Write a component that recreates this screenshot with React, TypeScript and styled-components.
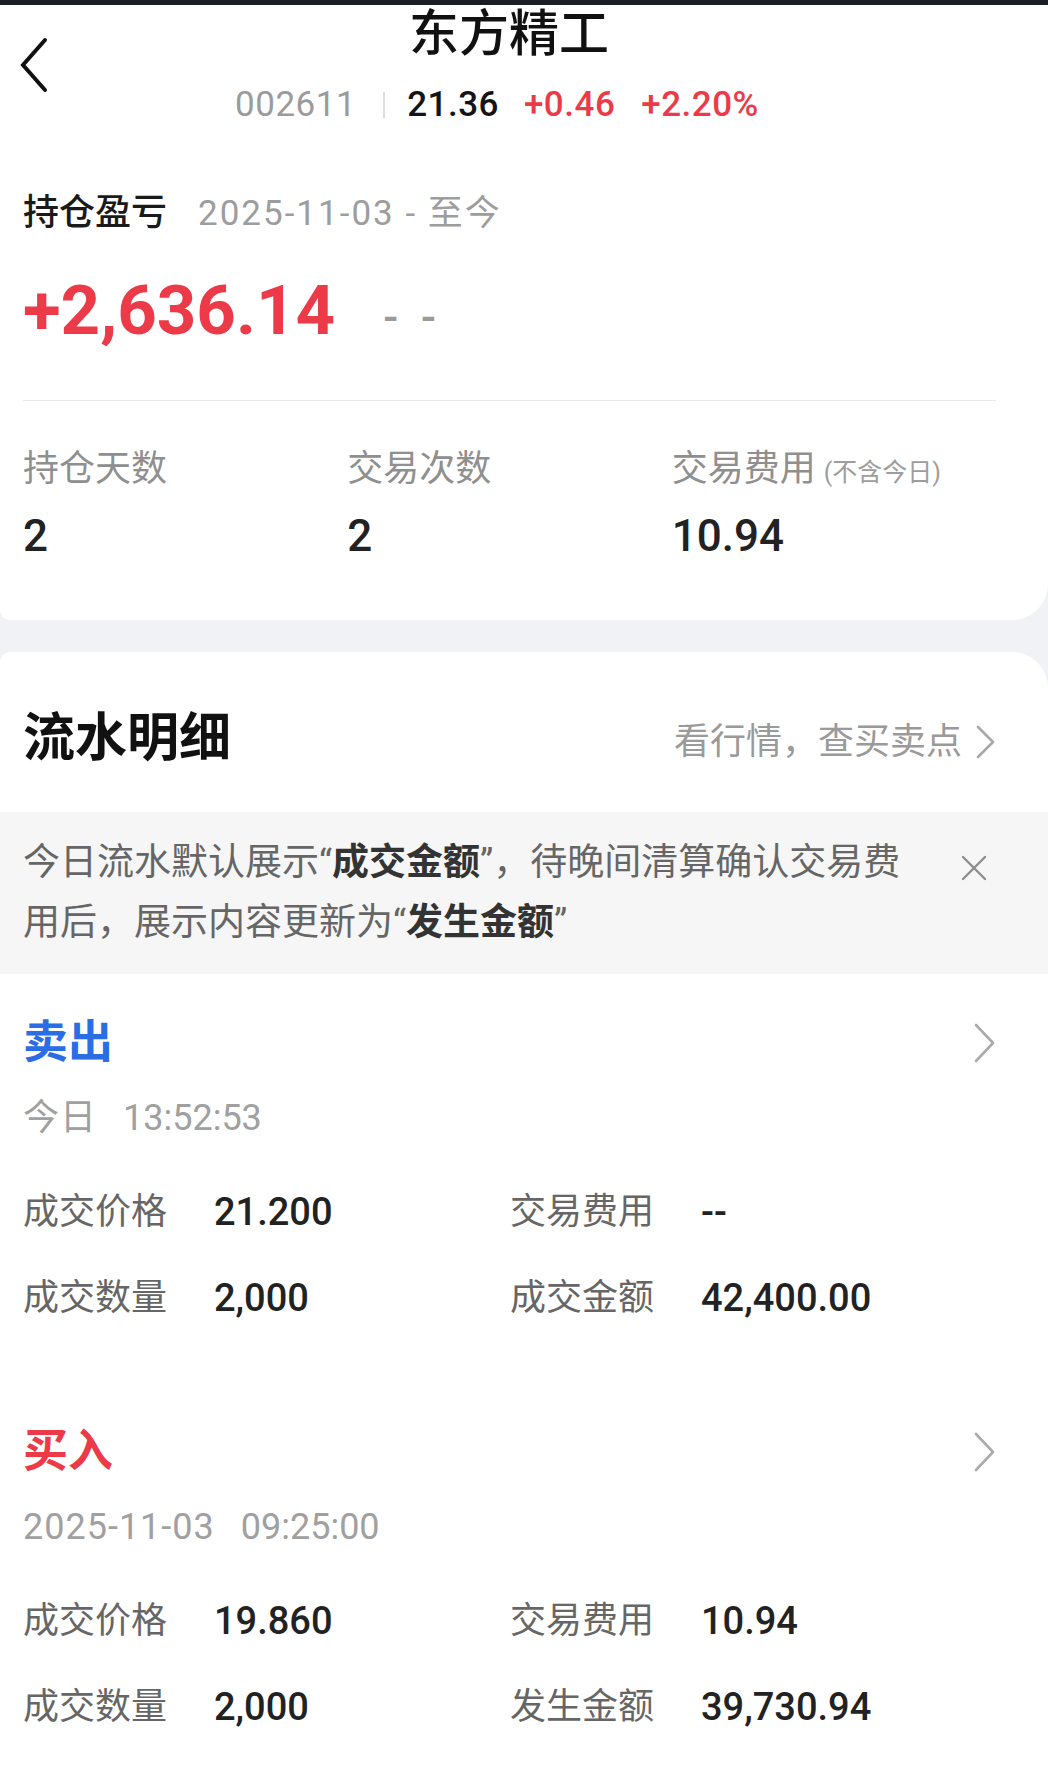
import React from 'react';
import styled, { createGlobalStyle } from 'styled-components';

const FONT = `Roboto, "Noto Sans CJK SC", "Noto Sans", sans-serif`;
const RED = '#ec3a48';
const BLUE = '#2a6de4';

const Global = createGlobalStyle`
  html, body { margin: 0; padding: 0; background: #ffffff; }
  body { font-family: ${FONT}; -webkit-font-smoothing: antialiased; }
  * { box-sizing: border-box; }
`;

const Page = styled.div`
  width: 1048px;
  background: #f1f2f6;
  display: flex;
  flex-direction: column;
`;

const StatusStrip = styled.div`
  height: 5px;
  background: #1c1d24;
`;

const TopCard = styled.section`
  background: #ffffff;
  border-radius: 0 0 36px 10px;
`;

const Header = styled.header`
  display: grid;
  grid-template-columns: 1fr auto 1fr;
  align-items: center;
  height: 120px;
  padding: 0 50px 0 20px;
`;

const BackButton = styled.button`
  justify-self: start;
  display: flex;
  align-items: center;
  padding: 0;
  border: 0;
  background: transparent;
  cursor: pointer;
`;

const TitleBlock = styled.div`
  display: flex;
  flex-direction: column;
  align-items: center;
`;

const StockName = styled.h1`
  margin: 0;
  font-size: 50px;
  line-height: 58px;
  font-weight: 500;
  color: #111111;
`;

const QuoteLine = styled.div`
  display: flex;
  align-items: center;
  margin-top: 22px;
  margin-right: 24px;
  font-size: 35px;
  line-height: 40px;
`;

const QuoteText = styled.span<{ $tone: 'code' | 'price' | 'up'; $gap?: number }>`
  color: ${p => (p.$tone === 'code' ? '#9b9b9b' : p.$tone === 'up' ? RED : '#141414')};
  font-weight: ${p => (p.$tone === 'code' ? 400 : 500)};
  margin-left: ${p => p.$gap ?? 0}px;
  letter-spacing: 0.5px;
`;

const QuoteDivider = styled.span`
  width: 2px;
  height: 26px;
  background: #dedede;
  margin: 0 22px 0 27px;
`;

const Summary = styled.div`
  padding: 66px 52px 58px 23px;
`;

const PnlHead = styled.div`
  display: flex;
  align-items: baseline;
  line-height: 44px;
`;

const PnlTitle = styled.span`
  font-size: 36px;
  font-weight: 500;
  color: #1a1a1a;
`;

const PnlRange = styled.span`
  font-size: 35px;
  color: #9d9d9d;
  margin-left: 31px;
  letter-spacing: 2px;
`;

const PnlRow = styled.div`
  display: flex;
  align-items: center;
  margin-top: 35px;
  height: 80px;
`;

const BigNumber = styled.span`
  font-size: 69px;
  line-height: 80px;
  font-weight: 700;
  color: ${RED};
`;

const PlaceholderDash = styled.span`
  margin-left: 48px;
  padding-top: 12px;
  font-size: 44px;
  letter-spacing: 6px;
  color: #9a9a9a;
  font-weight: 500;
`;

const Rule = styled.div`
  height: 1px;
  background: #e9e9e9;
  margin-top: 49px;
`;

const StatGrid = styled.div`
  display: grid;
  grid-template-columns: repeat(3, 1fr);
  margin-top: 46px;
`;

const Stat = styled.div`
  display: flex;
  flex-direction: column;
`;

const StatLabel = styled.div`
  display: flex;
  align-items: baseline;
  height: 44px;
  font-size: 36px;
  line-height: 44px;
  color: #8f8f8f;
`;

const StatNote = styled.span`
  font-size: 25px;
  line-height: 25px;
  color: #9d9d9d;
  margin-left: 8px;
`;

const StatValue = styled.div`
  margin-top: 19px;
  font-size: 44px;
  line-height: 52px;
  font-weight: 500;
  color: #222222;
`;

const FlowCard = styled.section`
  margin-top: 32px;
  background: #ffffff;
  border-radius: 10px 36px 0 0;
  padding: 57px 0 60px;
`;

const FlowHead = styled.div`
  display: flex;
  align-items: center;
  justify-content: space-between;
  padding: 0 52px 0 23px;
  height: 60px;
`;

const FlowTitle = styled.h2`
  margin: 0;
  font-size: 52px;
  line-height: 60px;
  font-weight: 700;
  color: #111111;
`;

const FlowLink = styled.a`
  display: flex;
  align-items: center;
  gap: 14px;
  padding-top: 6px;
  font-size: 36px;
  line-height: 44px;
  color: #9a9a9a;
  text-decoration: none;
`;

const Notice = styled.div`
  display: flex;
  align-items: flex-start;
  margin-top: 43px;
  background: #f6f6f6;
  padding: 21px 52px 21px 23px;
`;

const NoticeText = styled.p`
  flex: 1;
  margin: 0;
  font-size: 37px;
  line-height: 60px;
  color: #666666;
  white-space: nowrap;
`;

const Strong = styled.b`
  font-weight: 600;
  color: #333333;
`;

const CloseButton = styled.button`
  margin: 22px 9px 0 0;
  padding: 0;
  border: 0;
  background: transparent;
  display: flex;
`;

const Trade = styled.article<{ $first?: boolean }>`
  padding: 0 52px 0 23px;
  margin-top: ${p => (p.$first ? 43 : 106)}px;
`;

const TradeHead = styled.div`
  display: flex;
  align-items: center;
  justify-content: space-between;
  height: 52px;
`;

const TradeType = styled.span<{ $side: 'buy' | 'sell' }>`
  font-size: 45px;
  line-height: 52px;
  font-weight: 700;
  color: ${p => (p.$side === 'buy' ? RED : BLUE)};
`;

const TradeTime = styled.div`
  margin-top: 27px;
  font-size: 36px;
  line-height: 44px;
  color: #a0a0a0;
  letter-spacing: 1px;
`;

const TimePart = styled.span`
  margin-left: 26px;
  letter-spacing: 0;
`;

const FieldGrid = styled.div`
  display: grid;
  grid-template-columns: 487px 1fr;
  row-gap: 42px;
  margin-top: 50px;
`;

const Field = styled.div`
  display: flex;
  align-items: center;
  line-height: 44px;
`;

const FieldLabel = styled.span`
  width: 191px;
  font-size: 36px;
  color: #666666;
`;

const FieldValue = styled.span`
  font-size: 38px;
  font-weight: 500;
  color: #222222;
`;

const ChevronRight = ({ w = 22, h = 40, color = '#ababab' }: { w?: number; h?: number; color?: string }) => (
  <svg width={w} height={h} viewBox={`0 0 ${w} ${h}`} fill="none">
    <polyline
      points={`2,2 ${w - 3},${h / 2} 2,${h - 2}`}
      stroke={color}
      strokeWidth={2.6}
      strokeLinecap="round"
      strokeLinejoin="round"
    />
  </svg>
);

type Row = [string, string];
type TradeData = {
  side: 'buy' | 'sell';
  label: string;
  day: string;
  time: string;
  fields: Row[];
};

const trades: TradeData[] = [
  {
    side: 'sell',
    label: '卖出',
    day: '今日',
    time: '13:52:53',
    fields: [
      ['成交价格', '21.200'],
      ['交易费用', '--'],
      ['成交数量', '2,000'],
      ['成交金额', '42,400.00'],
    ],
  },
  {
    side: 'buy',
    label: '买入',
    day: '2025-11-03',
    time: '09:25:00',
    fields: [
      ['成交价格', '19.860'],
      ['交易费用', '10.94'],
      ['成交数量', '2,000'],
      ['发生金额', '39,730.94'],
    ],
  },
];

export default function App() {
  return (
    <>
      <Global />
      <Page>
        <StatusStrip />
        <TopCard>
          <Header>
            <BackButton aria-label="返回">
              <svg width="28" height="56" viewBox="0 0 28 56" fill="none">
                <polyline
                  points="25,3 3,28 25,53"
                  stroke="#111"
                  strokeWidth={4}
                  strokeLinecap="round"
                  strokeLinejoin="miter"
                />
              </svg>
            </BackButton>
            <TitleBlock>
              <StockName>东方精工</StockName>
              <QuoteLine>
                <QuoteText $tone="code">002611</QuoteText>
                <QuoteDivider />
                <QuoteText $tone="price">21.36</QuoteText>
                <QuoteText $tone="up" $gap={25}>+0.46</QuoteText>
                <QuoteText $tone="up" $gap={26}>+2.20%</QuoteText>
              </QuoteLine>
            </TitleBlock>
            <div />
          </Header>
          <Summary>
            <PnlHead>
              <PnlTitle>持仓盈亏</PnlTitle>
              <PnlRange>2025-11-03 - 至今</PnlRange>
            </PnlHead>
            <PnlRow>
              <BigNumber>+2,636.14</BigNumber>
              <PlaceholderDash>- -</PlaceholderDash>
            </PnlRow>
            <Rule />
            <StatGrid>
              <Stat>
                <StatLabel>持仓天数</StatLabel>
                <StatValue>2</StatValue>
              </Stat>
              <Stat>
                <StatLabel>交易次数</StatLabel>
                <StatValue>2</StatValue>
              </Stat>
              <Stat>
                <StatLabel>
                  交易费用<StatNote>(不含今日)</StatNote>
                </StatLabel>
                <StatValue>10.94</StatValue>
              </Stat>
            </StatGrid>
          </Summary>
        </TopCard>

        <FlowCard>
          <FlowHead>
            <FlowTitle>流水明细</FlowTitle>
            <FlowLink>
              看行情，查买卖点
              <ChevronRight w={20} h={34} color="#a8a8a8" />
            </FlowLink>
          </FlowHead>
          <Notice>
            <NoticeText>
              今日流水默认展示“<Strong>成交金额</Strong>”，待晚间清算确认交易费
              <br />
              用后，展示内容更新为“<Strong>发生金额</Strong>”
            </NoticeText>
            <CloseButton aria-label="关闭">
              <svg width="26" height="26" viewBox="0 0 26 26" fill="none">
                <path d="M2 2 L24 24 M24 2 L2 24" stroke="#8c8c8c" strokeWidth={2.4} strokeLinecap="round" />
              </svg>
            </CloseButton>
          </Notice>

          {trades.map((t, i) => (
            <Trade key={t.label} $first={i === 0}>
              <TradeHead>
                <TradeType $side={t.side}>{t.label}</TradeType>
                <ChevronRight />
              </TradeHead>
              <TradeTime>
                {t.day}
                <TimePart>{t.time}</TimePart>
              </TradeTime>
              <FieldGrid>
                {t.fields.map(([k, v]) => (
                  <Field key={k}>
                    <FieldLabel>{k}</FieldLabel>
                    <FieldValue>{v}</FieldValue>
                  </Field>
                ))}
              </FieldGrid>
            </Trade>
          ))}
        </FlowCard>
      </Page>
    </>
  );
}
